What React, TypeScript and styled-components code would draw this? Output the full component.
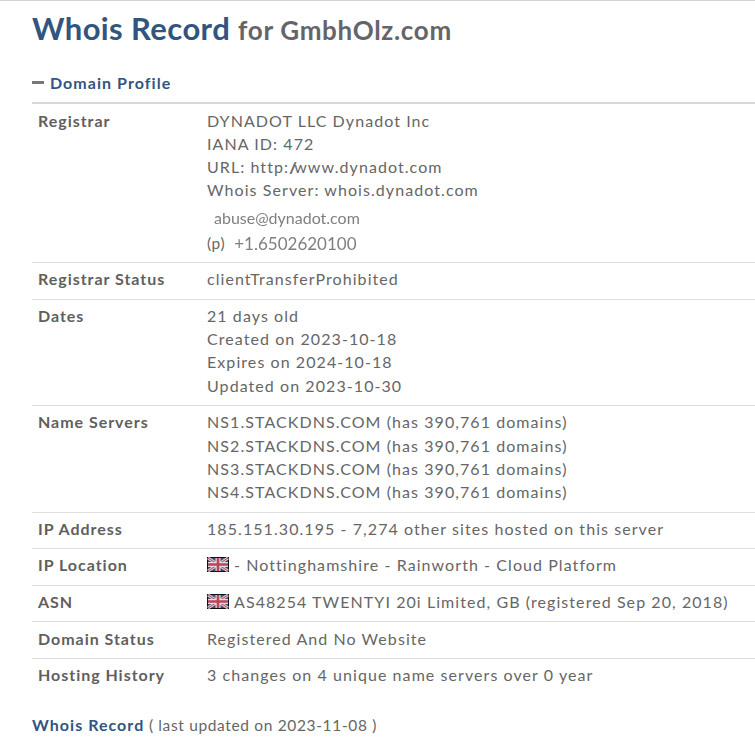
import React from "react";
import styled, { createGlobalStyle } from "styled-components";

const Global = createGlobalStyle`
  html, body { margin: 0; padding: 0; background: #fff; }
  body { font-family: Lato, "Noto Sans", sans-serif; color: #5f5f5f; overflow: hidden; }
`;

const Page = styled.div`
  width: 755px;
  height: 741px;
  box-sizing: border-box;
  border-top: 1px solid #d4d4d4;
  padding: 0 0 0 32px;
  overflow: hidden;
`;

const Title = styled.h1`
  margin: 0;
  padding-top: 8px;
  height: 52px;
  line-height: 38px;
  font-size: 31px;
  font-weight: 700;
  color: #31557f;
  letter-spacing: 0.4px;
  white-space: nowrap;
`;

const TitleSub = styled.span`
  font-size: 26px;
  color: #63656a;
  letter-spacing: 0.7px;
`;

const SectionHead = styled.div`
  display: flex;
  align-items: center;
  gap: 6px;
  margin-top: 7px;
  height: 28px;
  padding-bottom: 5px;
  font-size: 16px;
  font-weight: 700;
  letter-spacing: 1.05px;
  color: #31557f;
`;

const Dash = styled.span`
  width: 12px;
  height: 3px;
  background: #77787a;
`;

const Table = styled.div`
  margin-top: 1px;
  border-top: 2px solid #d8d8d8;
`;

const Row = styled.div<{ $h: number; $top?: number }>`
  display: grid;
  grid-template-columns: 169px 1fr;
  height: ${(p) => p.$h}px;
  box-sizing: border-box;
  padding: ${(p) => p.$top ?? 4}px 0 0 6px;
  border-bottom: 1px solid #dfdfdf;
  &:last-child { border-bottom: 0; }
`;

const Label = styled.div`
  font-size: 16px;
  font-weight: 700;
  line-height: 23.2px;
  letter-spacing: 0.97px;
  color: #5f5f5f;
`;

const Value = styled.div`
  font-size: 16px;
  line-height: 23.2px;
  letter-spacing: 1.07px;
  color: #666666;
  white-space: nowrap;
`;

const Line = styled.div`
  display: flex;
  align-items: center;
  height: 23.2px;
  white-space: pre;
`;

const Slashes = styled.span`
  letter-spacing: -2.9px;
`;

const ImgText = styled.span<{ $size: number; $indent?: number }>`
  font-size: ${(p) => p.$size}px;
  letter-spacing: 0;
  color: #7f7f7f;
  margin-left: ${(p) => p.$indent ?? 0}px;
  filter: blur(0.45px);
`;

const EmailLine = styled(Line)`
  margin-top: 5px;
`;

const PhoneLine = styled(Line)`
  margin-top: 2px;
`;

const PhoneLabel = styled.span`
  font-size: 15.5px;
  letter-spacing: 0.6px;
  margin-right: 9px;
`;

const FlagSvg = styled.svg`
  width: 22px;
  height: 15px;
  margin-right: 5px;
  flex: none;
  filter: blur(0.35px);
`;

const Footer = styled.div`
  margin-top: 18px;
  font-size: 15.5px;
  line-height: 23px;
  letter-spacing: 0.65px;
  color: #666666;
  white-space: nowrap;
`;

const FooterLink = styled.span`
  font-size: 16px;
  font-weight: 700;
  letter-spacing: 1.04px;
  color: #31557f;
`;

const Flag = () => (
  <FlagSvg viewBox="0 0 22 15" aria-hidden="true">
    <rect width="22" height="15" fill="#101018" />
    <rect x="1" y="1" width="20" height="13" fill="#474a78" />
    <path d="M1 1 21 14M21 1 1 14" stroke="#d8ced4" strokeWidth="3" />
    <path d="M1 1 21 14M21 1 1 14" stroke="#a84a5c" strokeWidth="1" />
    <path d="M11 1v13M1 7.5h20" stroke="#e2dadf" strokeWidth="5" />
    <path d="M11 1v13M1 7.5h20" stroke="#bd4458" strokeWidth="2.6" />
  </FlagSvg>
);

export default function App() {
  return (
    <Page>
      <Global />
      <Title>
        Whois Record <TitleSub>for GmbhOlz.com</TitleSub>
      </Title>
      <SectionHead>
        <Dash />
        Domain Profile
      </SectionHead>
      <Table>
        <Row $h={159} $top={4.7}>
          <Label>Registrar</Label>
          <Value>
            <Line>DYNADOT LLC Dynadot Inc</Line>
            <Line>IANA ID: 472</Line>
            <Line>URL: http:<Slashes>//</Slashes>www.dynadot.com</Line>
            <Line>Whois Server: whois.dynadot.com</Line>
            <EmailLine>
              <ImgText $size={16} $indent={7}>abuse@dynadot.com</ImgText>
            </EmailLine>
            <PhoneLine>
              <PhoneLabel>(p)</PhoneLabel>
              <ImgText $size={17}>+1.6502620100</ImgText>
            </PhoneLine>
          </Value>
        </Row>
        <Row $h={37}>
          <Label>Registrar Status</Label>
          <Value>clientTransferProhibited</Value>
        </Row>
        <Row $h={106}>
          <Label>Dates</Label>
          <Value>
            <Line>21 days old</Line>
            <Line>Created on 2023-10-18</Line>
            <Line>Expires on 2024-10-18</Line>
            <Line>Updated on 2023-10-30</Line>
          </Value>
        </Row>
        <Row $h={107} $top={4.4}>
          <Label>Name Servers</Label>
          <Value>
            <Line>NS1.STACKDNS.COM (has 390,761 domains)</Line>
            <Line>NS2.STACKDNS.COM (has 390,761 domains)</Line>
            <Line>NS3.STACKDNS.COM (has 390,761 domains)</Line>
            <Line>NS4.STACKDNS.COM (has 390,761 domains)</Line>
          </Value>
        </Row>
        <Row $h={36}>
          <Label>IP Address</Label>
          <Value>185.151.30.195 - 7,274 other sites hosted on this server</Value>
        </Row>
        <Row $h={37}>
          <Label>IP Location</Label>
          <Value>
            <Line><Flag />- Nottinghamshire - Rainworth - Cloud Platform</Line>
          </Value>
        </Row>
        <Row $h={36}>
          <Label>ASN</Label>
          <Value>
            <Line><Flag />AS48254 TWENTYI 20i Limited, GB (registered Sep 20, 2018)</Line>
          </Value>
        </Row>
        <Row $h={37} $top={5}>
          <Label>Domain Status</Label>
          <Value>Registered And No Website</Value>
        </Row>
        <Row $h={36}>
          <Label>Hosting History</Label>
          <Value>3 changes on 4 unique name servers over 0 year</Value>
        </Row>
      </Table>
      <Footer>
        <FooterLink>Whois Record</FooterLink> ( last updated on 2023-11-08 )
      </Footer>
    </Page>
  );
}
